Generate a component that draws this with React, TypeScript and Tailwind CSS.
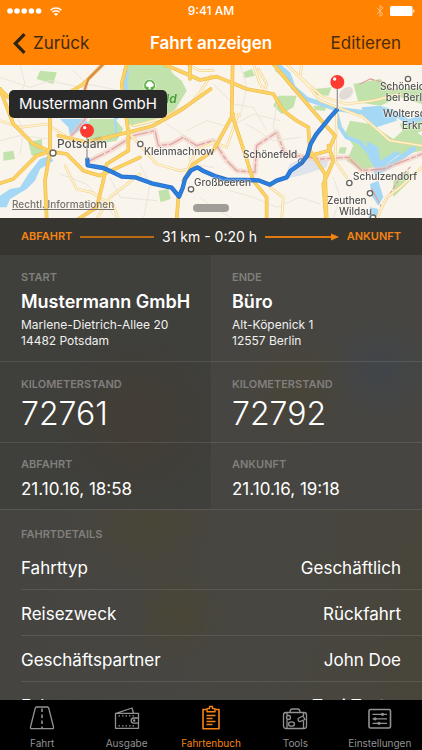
import type { ReactNode } from "react";

const minorRoads = [
  "M0 40 L90 70 L150 50 L240 70",
  "M60 0 L75 60 L40 130 L70 200 L60 270",
  "M0 230 L60 215 L150 225",
  "M180 330 L260 360 L330 440 L350 465",
  "M420 300 L450 360 L430 465",
  "M560 200 L620 170 L690 190 L760 150 L840 170",
  "M640 60 L700 120 L760 130 L800 200",
  "M720 0 L740 70 L720 160",
  "M690 380 L760 400 L830 430 L900 400 L960 420",
  "M600 400 L640 430 L700 465",
  "M500 180 L560 220 L570 300 L640 310",
  "M330 340 L360 400 L470 410",
  "M740 180 L820 230 L900 220",
  "M830 120 L820 190 L860 260 L900 270",
  "M1000 340 L1020 400 L1000 465",
  "M220 20 L260 60 L360 80",
];

const thinRoads = [
  "M0 170 L60 190 L140 180 L210 225",
  "M195 305 L230 375 L275 385 L340 425 L355 465",
  "M290 465 L330 400 L420 330",
  "M390 210 L470 300 L540 320 L600 310",
  "M632 35 L600 85 L570 120 L480 165 L400 185",
  "M560 320 L590 260 L640 235 L680 250 L715 150",
  "M760 0 L780 60 L795 80 L800 60 L775 15",
  "M860 0 L920 60 L960 110 L1090 160 L1170 230 L1266 245",
  "M905 0 L900 40 L970 100 L1040 120 L1120 110 L1200 90",
  "M1010 150 L1005 290 L1040 340",
  "M810 370 L850 400 L845 465",
  "M1130 465 L1160 400 L1200 370 L1266 310",
  "M560 0 L600 20 L640 20",
];

const majorRoads = [
  "M0 75 L40 180 L100 240 L150 262",
  "M150 150 L150 262 L135 350 L140 465",
  "M0 358 L40 345 L110 275 L150 262 L200 270 L250 320 L300 335 L420 280",
  "M0 75 L25 100 L170 110 L250 60 L310 0",
  "M175 215 L260 235 L385 205 L460 185 L540 140 L632 75",
  "M380 0 L365 60 L385 205 L385 260 L320 300 L310 350",
  "M490 0 L560 30 L600 48 L650 38 L740 75 L820 90 L850 140 L890 170 L925 190 L930 260 L975 330 L980 465",
  "M698 0 L695 150 L735 270 L760 350 L800 400 L800 465",
  "M700 150 L640 260 L580 300 L550 350",
  "M820 0 L870 60 L960 165 L1005 215 L985 260 L930 275",
  "M985 245 L1000 290 L970 360 L978 465",
  "M235 465 L290 430 L310 350",
  "M535 400 L530 465",
  "M570 0 L570 45",
];

const route =
  "M262 286 L263 304 L310 312 L345 328 L365 338 L405 340 L455 358 L515 371 L537 398 L548 372 L555 345 L572 320 L592 310 L612 322 L650 338 L680 347 L775 349 L810 362 L830 350 L860 340 L872 320 L905 297 L922 275 L932 240 L948 212 L990 160 L1010 138";

const border =
  "M215 215 L255 165 L255 70 M270 290 L330 260 L400 215 L465 200 L475 245 L515 240 L550 220 L590 245 L640 230 L680 290 L710 320 L765 325 L770 245 L830 205 L855 270 L960 285 L1045 280 L1085 320 L1150 315 L1266 270";

type PlaceProps = { className: string; children: ReactNode };

function Place({ className, children }: PlaceProps) {
  return (
    <span
      className={`absolute whitespace-nowrap font-medium text-[#555350] [text-shadow:0_0_2px_#fff,0_0_2px_#fff] ${className}`}
    >
      {children}
    </span>
  );
}

function RouteMap() {
  return (
    <section aria-label="Karte" className="relative h-[153px] shrink-0 overflow-hidden bg-[#f9f4ec]">
      <svg
        viewBox="0 3 1266 459"
        preserveAspectRatio="xMinYMin slice"
        className="block h-full w-full"
        fill="none"
        strokeLinejoin="round"
        strokeLinecap="round"
        aria-hidden="true"
      >
        <rect width="1266" height="470" fill="#f9f4ec" />
        <g fill="#c2e2ab">
          <path d="M385 0 L500 0 L520 30 L545 50 L560 80 L530 130 L500 165 L400 190 L375 170 L365 60Z" />
          <path d="M270 165 L345 165 L370 195 L350 230 L290 240 L245 215Z" />
          <path d="M120 20 L170 25 L160 60 L110 45Z" />
          <path d="M85 235 L125 225 L130 270 L95 275Z" />
          <path d="M10 265 L40 260 L45 285 L10 290Z" />
          <path d="M475 380 L505 375 L512 405 L482 415Z" />
          <path d="M825 5 L850 15 L880 45 L860 50 L825 20Z" />
          <path d="M730 25 L755 15 L765 35 L735 42Z" />
          <path d="M835 95 L890 95 L880 130 L845 150 L820 125Z" />
          <path d="M945 75 L995 70 L985 95 L945 92Z M940 125 L980 125 L975 140 L945 138Z" />
          <path d="M1060 60 L1140 45 L1180 75 L1266 70 L1266 120 L1200 100 L1140 125 L1075 115Z" />
          <path d="M1050 170 L1110 180 L1180 225 L1220 190 L1266 215 L1266 260 L1190 275 L1150 300 L1085 320 L1040 290 L1060 245 L1035 210Z" />
          <path d="M1200 180 L1266 150 L1266 200 L1215 225Z M1180 350 L1225 320 L1235 345 L1180 400Z" />
          <path d="M1020 250 L1040 250 L1035 270 L1015 268Z" />
        </g>
        <g fill="#a4d8f4">
          <path d="M370 15 L388 20 L382 60 L395 110 L360 160 L345 170 L360 110Z" />
          <path d="M180 165 L245 165 L265 175 L240 200 L210 215 L205 190Z" />
          <path d="M0 395 L30 375 L60 370 L85 330 L120 285 L150 275 L160 290 L120 315 L105 350 L80 375 L30 405 L20 430 L0 430Z" />
          <path d="M1085 130 L1140 125 L1190 140 L1190 170 L1130 190 L1090 165Z" />
          <path d="M1100 230 L1135 250 L1140 290 L1190 260 L1200 270 L1160 300 L1130 325 L1105 280Z" />
          <path d="M1110 360 L1135 350 L1150 400 L1135 425 L1115 395Z M1110 430 L1135 435 L1130 465 L1105 465Z" />
        </g>
        <g stroke="#a4d8f4">
          <path strokeWidth="14" d="M830 0 L865 30 L880 70 L920 105 L965 120 L1010 135 L1090 145" />
          <path strokeWidth="12" d="M1010 150 L1020 190 L1040 220 L1080 235 L1110 270 L1140 300" />
          <path strokeWidth="16" d="M1190 150 L1225 175 L1266 160 M1130 325 L1160 310 L1240 255" />
          <path strokeWidth="7" d="M345 165 L350 220" />
        </g>
        <path d="M850 345 L870 300 L900 285 L985 290 L980 310 L900 335Z" fill="#dfe3ec" />
        <path d={border} stroke="#f3c7bc" strokeWidth="16" opacity="0.5" />
        <g stroke="#dfa5a5" strokeWidth="4" strokeDasharray="46 8 12 8">
          <path d={border} />
          <path d="M1115 375 L1145 430 L1200 340 L1230 310 M1080 60 L1110 45 L1150 55 L1180 80" />
        </g>
        <g stroke="#ebe6dc" strokeWidth="3">
          {minorRoads.map((d) => (
            <path key={d} d={d} />
          ))}
        </g>
        <g stroke="#f4d48f" strokeWidth="8">
          {thinRoads.map((d) => (
            <path key={d} d={d} />
          ))}
        </g>
        <g stroke="#fff6d8" strokeWidth="4">
          {thinRoads.map((d) => (
            <path key={d} d={d} />
          ))}
        </g>
        <g stroke="#ecb850" strokeWidth="11">
          {majorRoads.map((d) => (
            <path key={d} d={d} />
          ))}
        </g>
        <g stroke="#fcd363" strokeWidth="8">
          {majorRoads.map((d) => (
            <path key={d} d={d} />
          ))}
        </g>
        <path d="M255 75 L265 45 L310 0" stroke="#d98a4a" strokeWidth="7" />
        <circle cx="449" cy="64" r="18" fill="#62b04a" stroke="#fff" strokeWidth="2" />
        <path
          d="M446 76 V69 C436 70 435 60 441 58 C441 50 457 50 457 58 C464 60 463 70 452 69 V76Z"
          fill="#fff"
        />
        <path d={route} stroke="#286cc0" strokeWidth="13" />
        <path d={route} stroke="#2a7fe0" strokeWidth="9" />
        <g fill="#fff" stroke="#67645f" strokeWidth="4">
          <circle cx="159" cy="267" r="9" />
          <circle cx="421" cy="240" r="8" />
          <circle cx="573" cy="376" r="8" />
          <circle cx="1048" cy="357" r="8" />
          <circle cx="1110" cy="388" r="8" />
          <circle cx="1119" cy="461" r="8" />
          <circle cx="1224" cy="45" r="8" />
        </g>
        <circle cx="903" cy="292" r="8" stroke="#4d6f99" strokeWidth="3" />
        <g fill="#55565a" opacity="0.15">
          <ellipse cx="1038" cy="88" rx="24" ry="16" transform="rotate(-38 1038 88)" />
          <ellipse cx="1036" cy="90" rx="17" ry="10" transform="rotate(-38 1036 90)" />
          <ellipse cx="288" cy="234" rx="22" ry="12" transform="rotate(-38 288 234)" />
        </g>
        <path d="M261 215 V284 M1012 70 V136" stroke="#9a9a9c" strokeWidth="4" />
        <g fill="#fd3b30">
          <circle cx="261" cy="200" r="21" />
          <circle cx="1012" cy="54" r="21" />
        </g>
        <g fill="#fff">
          <circle cx="254" cy="191" r="5" />
          <circle cx="1004" cy="45" r="5" />
        </g>
      </svg>
      <Place className="left-[57px] top-[71px] text-[12px] leading-[16px]">Potsdam</Place>
      <Place className="left-[144px] top-[79px] text-[10px] leading-[14px]">Kleinmachnow</Place>
      <Place className="left-[194px] top-[110px] text-[10px] leading-[14px]">Großbeeren</Place>
      <Place className="left-[243px] top-[82px] text-[10px] leading-[14px]">Schönefeld</Place>
      <Place className="left-[380px] top-[16px] text-center text-[10px] leading-[11px]">
        Schöneiche
        <br />
        bei Berlin
      </Place>
      <Place className="left-[383px] top-[41px] text-[10px] leading-[14px]">Woltersdorf</Place>
      <Place className="left-[402px] top-[53px] text-[10px] leading-[14px]">Erkner</Place>
      <Place className="left-[353px] top-[104px] text-[10px] leading-[14px]">Schulzendorf</Place>
      <Place className="left-[327px] top-[128px] text-[10px] leading-[14px]">Zeuthen</Place>
      <Place className="left-[339px] top-[139px] text-[10px] leading-[14px]">Wildau</Place>
      <span className="absolute left-[166px] top-[27px] text-[12px] font-semibold italic leading-[14px] text-[#4a9a3c]">
        ld
      </span>
      <a
        href="#rechtliches"
        className="absolute left-[12px] top-[132px] text-[10px] font-medium leading-[14px] text-[#77736e] underline"
      >
        Rechtl. Informationen
      </a>
      <div className="absolute left-[9px] top-[25px] flex h-7 items-center rounded-[5px] bg-[#282828] px-[10px] text-[15px] text-white">
        Mustermann GmbH
      </div>
      <div className="absolute bottom-[6px] left-1/2 h-2 w-9 -translate-x-1/2 rounded-full bg-[#a09d99]" />
    </section>
  );
}

function Header() {
  return (
    <header className="shrink-0 bg-[#ff8200] text-white">
      <div className="grid h-[22px] grid-cols-[1fr_auto_1fr] items-center px-[7px]">
        <div className="flex items-center gap-2">
          <svg width="35" height="6" viewBox="0 0 35 6" fill="currentColor" aria-hidden="true">
            <circle cx="3" cy="3" r="2.8" />
            <circle cx="10" cy="3" r="2.8" />
            <circle cx="17.2" cy="3" r="2.8" />
            <circle cx="24.4" cy="3" r="2.8" />
            <circle cx="31.6" cy="3" r="2.8" />
          </svg>
          <svg width="12" height="9" viewBox="0 0 12 9" fill="none" stroke="currentColor" strokeWidth="1.5" aria-hidden="true">
            <path d="M.6 3.300a7.700 7.700 0 0 1 10.800 0M2.500 5.300a5 5 0 0 1 7 0" />
            <path d="M6 9 4 6.900a2.900 2.900 0 0 1 4 0z" fill="currentColor" stroke="none" />
          </svg>
        </div>
        <span className="text-center text-[12px] font-medium">9:41 AM</span>
        <div className="flex items-center justify-end gap-[6px]">
          <svg width="8" height="12" viewBox="0 0 8 12" fill="none" stroke="#ffc182" strokeWidth="1" aria-hidden="true">
            <path d="m.8 3 6.200 6L4 11.400V.6L7 3 .8 9" />
          </svg>
          <svg width="25" height="10" viewBox="0 0 25 10" fill="currentColor" aria-hidden="true">
            <rect width="22.5" height="10" rx="1.5" />
            <path d="M23.300 3.200c1.600.4 1.600 3.200 0 3.600z" />
          </svg>
        </div>
      </div>
      <nav className="grid h-[43px] grid-cols-[1fr_auto_1fr] items-center px-[21px] text-[17px]">
        <button type="button" className="-ml-2 flex items-center gap-[7px] justify-self-start text-[#3f2a12]">
          <svg width="13" height="21" viewBox="0 0 13 21" fill="none" stroke="#2e2413" strokeWidth="3.2" aria-hidden="true">
            <path d="M11.500 1.200 2.300 10.500l9.200 9.300" />
          </svg>
          Zurück
        </button>
        <h1 className="font-semibold">Fahrt anzeigen</h1>
        <button type="button" className="justify-self-end text-[#4a2c0b]">
          Editieren
        </button>
      </nav>
    </header>
  );
}

function Caption({ children }: { children: ReactNode }) {
  return <h2 className="text-[11px] font-semibold leading-[14px] text-[#817f7d]">{children}</h2>;
}

type StopProps = {
  side: string;
  name: string;
  street: string;
  city: string;
  km: string;
  timeLabel: string;
  time: string;
  tone: string;
};

function Stop({ side, name, street, city, km, timeLabel, time, tone }: StopProps) {
  return (
    <div className={tone}>
      <div className="h-[107px] border-b border-white/10 pl-[21px] pt-[15px]">
        <Caption>{side}</Caption>
        <p className="mt-[6px] whitespace-nowrap text-[18px] font-semibold leading-6">{name}</p>
        <p className="mt-[3px] text-[12px] leading-4 text-[#f0f0ef]">
          {street}
          <br />
          {city}
        </p>
      </div>
      <div className="h-[81px] border-b border-white/10 pl-[21px] pt-[15px]">
        <Caption>KILOMETERSTAND</Caption>
        <p className="mt-[3px] text-[32px] font-light leading-10">{km}</p>
      </div>
      <div className="h-[66px] pl-[21px] pt-[14px]">
        <Caption>{timeLabel}</Caption>
        <p className="mt-[6px] text-[17px] leading-6">{time}</p>
      </div>
    </div>
  );
}

const details = [
  ["Fahrttyp", "Geschäftlich"],
  ["Reisezweck", "Rückfahrt"],
  ["Geschäftspartner", "John Doe"],
  ["Fahrer", "Toni Tester"],
];

function TabIcon({ children }: { children: ReactNode }) {
  return (
    <svg
      width="26"
      height="26"
      viewBox="0 0 26 26"
      fill="none"
      stroke="currentColor"
      strokeWidth="1.3"
      strokeLinejoin="round"
      aria-hidden="true"
    >
      {children}
    </svg>
  );
}

const tabs = [
  {
    label: "Fahrt",
    active: false,
    icon: (
      <TabIcon>
        <path d="M7.500 2h11q1 0 1.200 1l4.800 19q.3 1.700-1.200 1.700H2.700Q1.200 23.700 1.500 22L6.300 3q.2-1 1.200-1z" />
        <path d="M13 3.500v20" strokeWidth="1.6" strokeDasharray="3.5 2.5" />
      </TabIcon>
    ),
  },
  {
    label: "Ausgabe",
    active: false,
    icon: (
      <TabIcon>
        <path d="M1.500 8.300h23v15h-23zM2 8.300l16-5.300 1.500 5.300" />
        <path d="M24.500 13h-4.700a2.600 2.600 0 0 0 0 5.200h4.700" />
        <path d="M4.500 10.800h17.500M4.500 20.800h17.500" strokeDasharray="1.5 2" />
        <circle cx="20.2" cy="15.6" r=".6" />
      </TabIcon>
    ),
  },
  {
    label: "Fahrtenbuch",
    active: true,
    icon: (
      <TabIcon>
        <path d="M8.500 4.500H5v19.300h16V4.500h-3.500" strokeWidth="1.6" />
        <path d="M9 3.600h2.500V1.500h3v2.100H17v3.200H9z" strokeWidth="1.4" />
        <path d="M8.500 10.500h9M8.500 13.500h6M8.500 16.500h9M8.500 19.500h6" strokeWidth="1.4" />
      </TabIcon>
    ),
  },
  {
    label: "Tools",
    active: false,
    icon: (
      <TabIcon>
        <rect x="1.5" y="7.5" width="23" height="16" rx="2.5" />
        <path d="M8 7.500c0-2.500 1-3.500 2.500-3.500h5c1.500 0 2.500 1 2.500 3.500M5 8v2.500M5 14.500v8.500M21.500 8v3M21.500 16v7" />
        <circle cx="6.5" cy="12.5" r="2" />
        <ellipse cx="9.5" cy="19" rx="3" ry="2.2" />
        <path d="m16 13.500 5-2.500 2 3.500-5 2.200-1.500-.5z" />
      </TabIcon>
    ),
  },
  {
    label: "Einstellungen",
    active: false,
    icon: (
      <TabIcon>
        <rect x="2" y="4.5" width="21.5" height="18.5" rx="1.5" strokeWidth="1.6" />
        <path d="M5.500 9.300h14.500M5.500 13.800h14.500M5.500 18.300h14.500" />
        <g fill="currentColor" stroke="none">
          <circle cx="15.5" cy="9.3" r="1.6" />
          <circle cx="8" cy="13.8" r="1.6" />
          <circle cx="12" cy="18.3" r="1.6" />
        </g>
      </TabIcon>
    ),
  },
];

export default function App() {
  return (
    <div className="flex h-screen flex-col overflow-hidden bg-black font-['Inter','Liberation_Sans',sans-serif] text-white">
      <Header />
      <main className="flex min-h-0 flex-1 flex-col overflow-hidden bg-[#454440]">
        <RouteMap />
        <div className="flex h-[37px] shrink-0 items-center gap-2 bg-[#36352f] px-[21px] text-[11px] font-semibold text-[#f58414]">
          <span>ABFAHRT</span>
          <span className="h-[2px] flex-1 bg-[#bd6c15]" />
          <span className="text-[14px] font-normal text-white">31 km - 0:20 h</span>
          <span className="flex flex-1 items-center">
            <span className="h-[2px] flex-1 bg-[#e07a13]" />
            <svg width="8" height="8" viewBox="0 0 8 8" fill="#f58414" aria-hidden="true">
              <path d="M0 .5 8 4 0 7.500z" />
            </svg>
          </span>
          <span>ANKUNFT</span>
        </div>
        <section className="grid shrink-0 grid-cols-2 border-b border-white/10">
          <Stop
            side="START"
            name="Mustermann GmbH"
            street="Marlene-Dietrich-Allee 20"
            city="14482 Potsdam"
            km="72761"
            timeLabel="ABFAHRT"
            time="21.10.16, 18:58"
            tone="bg-[radial-gradient(circle_at_65%_65%,#433d35,#3f3f3b_40%)]"
          />
          <Stop
            side="ENDE"
            name="Büro"
            street="Alt-Köpenick 1"
            city="12557 Berlin"
            km="72792"
            timeLabel="ANKUNFT"
            time="21.10.16, 19:18"
            tone="bg-[radial-gradient(circle_at_80%_45%,#41454a,transparent_25%),radial-gradient(circle_at_40%_52%,#484438,#464541_35%)]"
          />
        </section>
        <section className="flex-1 bg-[radial-gradient(circle_at_35%_5%,#494637,transparent_22%),radial-gradient(circle_at_42%_48%,#494536,transparent_20%),linear-gradient(100deg,#454440,#474641_60%,#48453a)] pl-[21px]">
          <div className="pb-[3px] pt-[17px]">
            <Caption>FAHRTDETAILS</Caption>
          </div>
          <dl className="text-[17px]">
            {details.map(([term, value]) => (
              <div
                key={term}
                className="flex h-[46px] items-center justify-between border-b border-white/10 pr-[21px] pt-[5px]"
              >
                <dt>{term}</dt>
                <dd>{value}</dd>
              </div>
            ))}
          </dl>
        </section>
      </main>
      <nav className="grid h-[50px] shrink-0 grid-cols-5 bg-black">
        {tabs.map((tab) => (
          <button
            key={tab.label}
            type="button"
            aria-current={tab.active ? "page" : undefined}
            className={`flex flex-col items-center pt-[5px] text-[10px] leading-[14px] ${tab.active ? "text-[#f58414]" : "text-[#929292]"}`}
          >
            {tab.icon}
            <span className="mt-[5px]">{tab.label}</span>
          </button>
        ))}
      </nav>
    </div>
  );
}
